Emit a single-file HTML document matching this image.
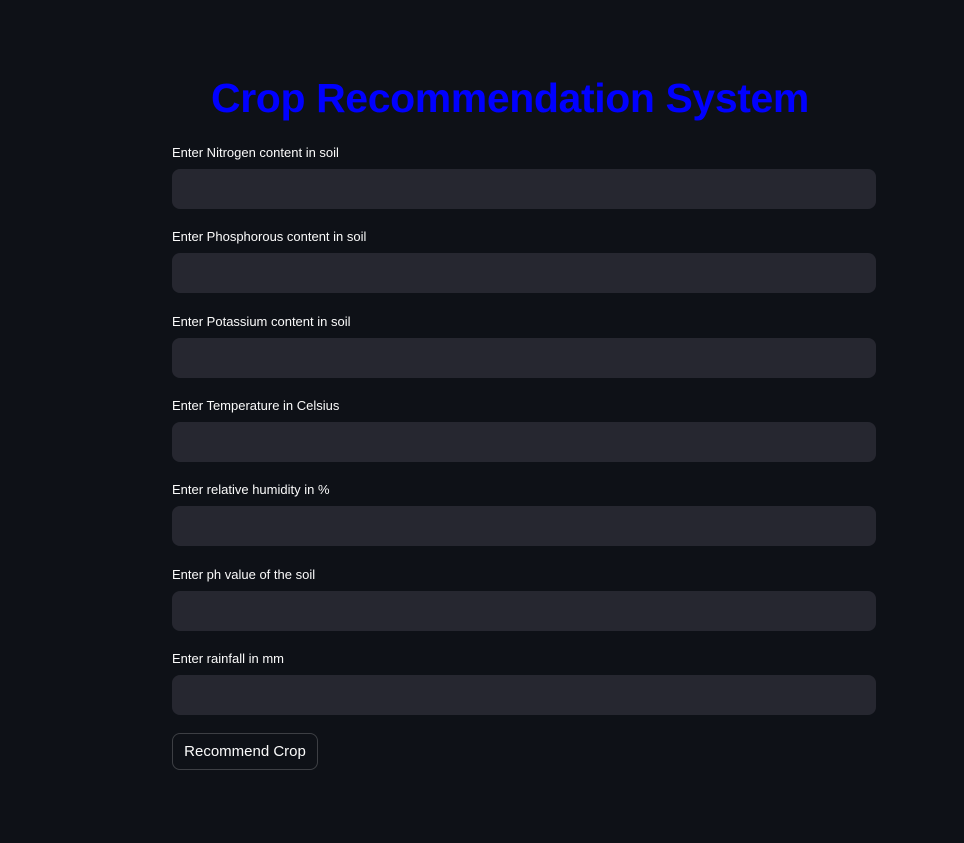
<!DOCTYPE html>
<html><head><meta charset="utf-8"><style>
html,body{margin:0;padding:0;background:#0e1117;width:964px;height:843px;overflow:hidden;font-family:"Liberation Sans",sans-serif;}
h1{position:absolute;left:0;width:1020px;top:72px;margin:0;text-align:center;color:#0000ff;font-size:41px;font-weight:bold;line-height:52px;letter-spacing:-0.4px;}
.lab{position:absolute;left:172px;color:#fafafa;font-size:13px;line-height:16px;}
.inp{position:absolute;left:172px;width:704px;height:40px;background:#262730;border-radius:8px;}
.btn{position:absolute;left:172px;top:733px;width:144px;height:35px;border:1px solid rgba(250,250,250,0.2);border-radius:8px;color:#fafafa;font-size:15px;line-height:35px;text-align:center;box-sizing:content-box;}
</style></head><body>
<h1>Crop Recommendation System</h1>
<div class="lab" style="top:145px">Enter Nitrogen content in soil</div><div class="inp" style="top:169px"></div>
<div class="lab" style="top:229px">Enter Phosphorous content in soil</div><div class="inp" style="top:253px"></div>
<div class="lab" style="top:314px">Enter Potassium content in soil</div><div class="inp" style="top:338px"></div>
<div class="lab" style="top:398px">Enter Temperature in Celsius</div><div class="inp" style="top:422px"></div>
<div class="lab" style="top:482px">Enter relative humidity in %</div><div class="inp" style="top:506px"></div>
<div class="lab" style="top:567px">Enter ph value of the soil</div><div class="inp" style="top:591px"></div>
<div class="lab" style="top:651px">Enter rainfall in mm</div><div class="inp" style="top:675px"></div>
<div class="btn">Recommend Crop</div>
</body></html>
